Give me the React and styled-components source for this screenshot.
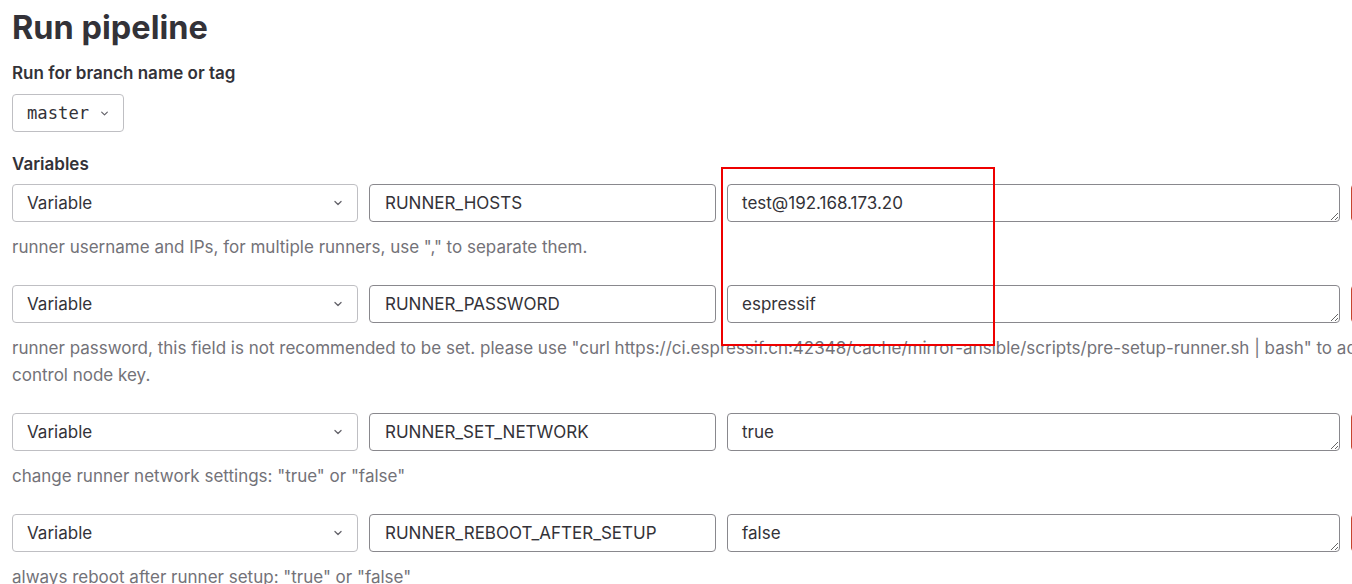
import React from "react";
import styled, { createGlobalStyle } from "styled-components";

const GlobalStyle = createGlobalStyle`
  html, body {
    margin: 0;
    padding: 0;
    background: #fff;
    overflow: hidden;
  }
  body {
    font-family: Inter, "Noto Sans", sans-serif;
    color: #333238;
  }
`;

const variables = [
  {
    key: "RUNNER_HOSTS",
    value: "test@192.168.173.20",
    help: `runner username and IPs, for multiple runners, use "," to separate them.`,
  },
  {
    key: "RUNNER_PASSWORD",
    value: "espressif",
    help: `runner password, this field is not recommended to be set. please use "curl https://ci.espressif.cn:42348/cache/mirror-ansible/scripts/pre-setup-runner.sh | bash" to add control node key.`,
  },
  {
    key: "RUNNER_SET_NETWORK",
    value: "true",
    help: `change runner network settings: "true" or "false"`,
  },
  {
    key: "RUNNER_REBOOT_AFTER_SETUP",
    value: "false",
    help: `always reboot after runner setup: "true" or "false"`,
  },
];

const Chevron = ({ size = 12 }) => (
  <svg width={size} height={size} viewBox="0 0 16 16" fill="none">
    <path
      d="M4.5 6.25 8 9.75l3.5-3.5"
      stroke="#626168"
      strokeWidth="1.4"
      strokeLinecap="round"
      strokeLinejoin="round"
    />
  </svg>
);

const App = () => {
  return (
    <Page>
      <GlobalStyle />
      <Title>Run pipeline</Title>

      <Label>Run for branch name or tag</Label>
      <RefDropdown>
        <RefText>master</RefText>
        <Chevron size={13} />
      </RefDropdown>

      <Label $top={20}>Variables</Label>
      <VariableList>
        {variables.map((v, i) => (
          <VariableBlock key={v.key} $first={i === 0}>
            <VariableRow>
              <TypeSelect>
                <span>Variable</span>
                <Chevron size={14} />
              </TypeSelect>
              <KeyInput readOnly value={v.key} />
              <ValueArea readOnly value={v.value} rows={1} />
              <RemoveButton aria-label="Remove variable" />
            </VariableRow>
            <HelpText>{v.help}</HelpText>
          </VariableBlock>
        ))}
      </VariableList>

      <Highlight />
    </Page>
  );
};

const Page = styled.div`
  position: relative;
  width: 1352px;
  height: 584px;
  overflow: hidden;
  padding: 8px 0 0 12px;
  box-sizing: border-box;
`;

const Title = styled.h1`
  margin: 0;
  font-size: 32.5px;
  line-height: 40px;
  font-weight: 700;
  color: #333238;
`;

const Label = styled.div`
  margin-top: ${(props) => props.$top || 13}px;
  font-size: 17px;
  line-height: 24px;
  font-weight: 600;
  color: #333238;
`;

const RefDropdown = styled.div`
  margin-top: 9px;
  width: 112px;
  height: 38px;
  box-sizing: border-box;
  border: 1px solid #bfbfc3;
  border-radius: 4px;
  display: flex;
  align-items: center;
  justify-content: space-between;
  padding: 0 12px 0 14px;
`;

const RefText = styled.span`
  font-family: "DejaVu Sans Mono", "Liberation Mono", monospace;
  font-size: 17.2px;
  color: #333238;
`;

const VariableList = styled.div`
  margin-top: 8px;
  display: flex;
  flex-direction: column;
`;

const VariableBlock = styled.div`
  margin-top: ${(props) => (props.$first ? 0 : 24)}px;
`;

const VariableRow = styled.div`
  display: grid;
  grid-template-columns: 346px 347px 613px 80px;
  column-gap: 11px;
  height: 38px;
`;

const fieldBase = `
  box-sizing: border-box;
  height: 38px;
  margin: 0;
  border-radius: 4px;
  font-family: Inter, "Noto Sans", sans-serif;
  font-size: 17px;
  color: #333238;
  background: #fff;
  outline: none;
`;

const TypeSelect = styled.div`
  ${fieldBase}
  border: 1px solid #bfbfc3;
  display: flex;
  align-items: center;
  justify-content: space-between;
  padding: 0 12px 0 14px;
`;

const KeyInput = styled.input`
  ${fieldBase}
  width: 100%;
  border: 1px solid #89888d;
  padding: 0 15px;
`;

const ValueArea = styled.textarea`
  ${fieldBase}
  width: 100%;
  min-height: 38px;
  border: 1px solid #89888d;
  padding: 8px 14px;
  line-height: 20px;
  resize: vertical;
  overflow: hidden;
`;

const RemoveButton = styled.button`
  box-sizing: border-box;
  height: 38px;
  border: 1px solid #c6442e;
  border-radius: 4px;
  background: #fff;
`;

const HelpText = styled.div`
  margin-top: 12px;
  width: 1410px;
  font-size: 17px;
  line-height: 27px;
  color: #737278;
`;

const Highlight = styled.div`
  position: absolute;
  left: 721px;
  top: 167px;
  width: 274px;
  height: 179px;
  box-sizing: border-box;
  border: 2px solid #ee0000;
  pointer-events: none;
`;

export default App;
